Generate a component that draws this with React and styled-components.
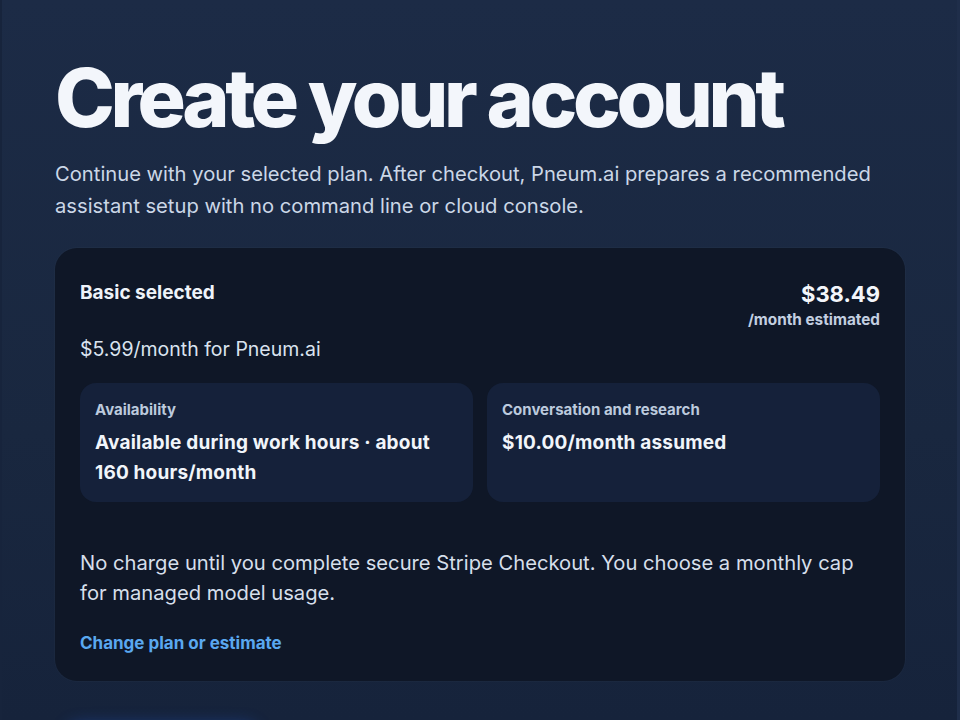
import React from 'react'
import styled, {createGlobalStyle} from 'styled-components'

const GlobalStl = createGlobalStyle`
  html, body {
    margin: 0;
    padding: 0;
    background: #132038;
    font-family: Inter, "Noto Sans", sans-serif;
    -webkit-font-smoothing: antialiased;
  }
`

const PageStl = styled.div`
  height: 720px;
  box-sizing: border-box;
  padding: 48px 53px 40px 53px;
  background: linear-gradient(180deg, #1c2b46 0%, #19273f 60%, #16233b 100%);
  border-left: 2px solid #17243c;
  border-right: 3px solid #1f2e4a;
  overflow: hidden;
`

const TitleStl = styled.h1`
  margin: 0;
  font-size: 80.5px;
  font-weight: 800;
  letter-spacing: -0.055em;
  line-height: 100px;
  color: #f3f6fb;
`

const LeadStl = styled.p`
  margin: 10px 0 0;
  max-width: 830px;
  font-size: 20.2px;
  line-height: 32px;
  color: #cbd7e7;
`

const SummaryStl = styled.section`
  margin-top: 26px;
  width: 850px;
  box-sizing: border-box;
  padding: 32px 25px 26px;
  border-radius: 22px;
  background: #0f1727;
  box-shadow: 0 0 0 1px rgba(255, 255, 255, 0.02);
`

const HeadRowStl = styled.div`
  display: flex;
  justify-content: space-between;
  align-items: flex-start;
`

const PlanNameStl = styled.div`
  font-size: 19px;
  font-weight: 700;
  color: #eef3f9;
  line-height: 26px;
`

const PlanPriceStl = styled.div`
  margin-top: 30px;
  font-size: 19.5px;
  line-height: 26px;
  color: #dae3ef;
`

const TotalStl = styled.div`
  text-align: right;
`

const TotalValueStl = styled.div`
  font-size: 22px;
  font-weight: 700;
  line-height: 28px;
  color: #f3f6fb;
`

const TotalNoteStl = styled.div`
  margin-top: 2px;
  font-size: 15.3px;
  font-weight: 700;
  line-height: 20px;
  color: #c3cfe0;
`

const FactsStl = styled.div`
  margin-top: 21px;
  display: grid;
  grid-template-columns: 1fr 1fr;
  gap: 14px;
`

const FactStl = styled.div`
  min-height: 119px;
  box-sizing: border-box;
  padding: 17px 15px 14px;
  border-radius: 16px;
  background: #15213a;
`

const FactLabelStl = styled.div`
  font-size: 15px;
  font-weight: 700;
  line-height: 20px;
  color: #bccadd;
`

const FactValueStl = styled.div`
  margin-top: 8px;
  font-size: 19px;
  font-weight: 700;
  letter-spacing: 0.01em;
  line-height: 30px;
  color: #f1f5fa;
`

const NoteStl = styled.p`
  margin: 46px 0 0;
  font-size: 20.2px;
  line-height: 30px;
  color: #d6dfeb;
`

const LinkStl = styled.a`
  display: inline-block;
  margin-top: 23px;
  font-size: 17px;
  font-weight: 700;
  line-height: 24px;
  color: #5aa8f0;
  text-decoration: none;
`

// checkout button sits just below the fold, only its glow shows
const ButtonStl = styled.button`
  display: block;
  margin-top: 46px;
  margin-left: 12px;
  width: 190px;
  height: 50px;
  border: 0;
  border-radius: 12px;
  background: #1d5fd6;
  box-shadow: 0 -3px 16px rgba(37, 99, 235, 0.4);
`

const facts = [
  {label: 'Availability', value: 'Available during work hours · about 160 hours/month'},
  {label: 'Conversation and research', value: '$10.00/month assumed'},
]

export default function App() {
  return (
    <>
      <GlobalStl />
      <PageStl>
        <TitleStl>Create your account</TitleStl>
        <LeadStl>
          Continue with your selected plan. After checkout, Pneum.ai prepares a recommended
          assistant setup with no command line or cloud console.
        </LeadStl>

        <SummaryStl>
          <HeadRowStl>
            <div>
              <PlanNameStl>Basic selected</PlanNameStl>
              <PlanPriceStl>$5.99/month for Pneum.ai</PlanPriceStl>
            </div>
            <TotalStl>
              <TotalValueStl>$38.49</TotalValueStl>
              <TotalNoteStl>/month estimated</TotalNoteStl>
            </TotalStl>
          </HeadRowStl>

          <FactsStl>
            {facts.map(f => (
              <FactStl key={f.label}>
                <FactLabelStl>{f.label}</FactLabelStl>
                <FactValueStl>{f.value}</FactValueStl>
              </FactStl>
            ))}
          </FactsStl>

          <NoteStl>
            No charge until you complete secure Stripe Checkout. You choose a monthly cap
            for managed model usage.
          </NoteStl>
          <LinkStl href="#">Change plan or estimate</LinkStl>
        </SummaryStl>

        <ButtonStl aria-label="Continue to checkout" />
      </PageStl>
    </>
  )
}
